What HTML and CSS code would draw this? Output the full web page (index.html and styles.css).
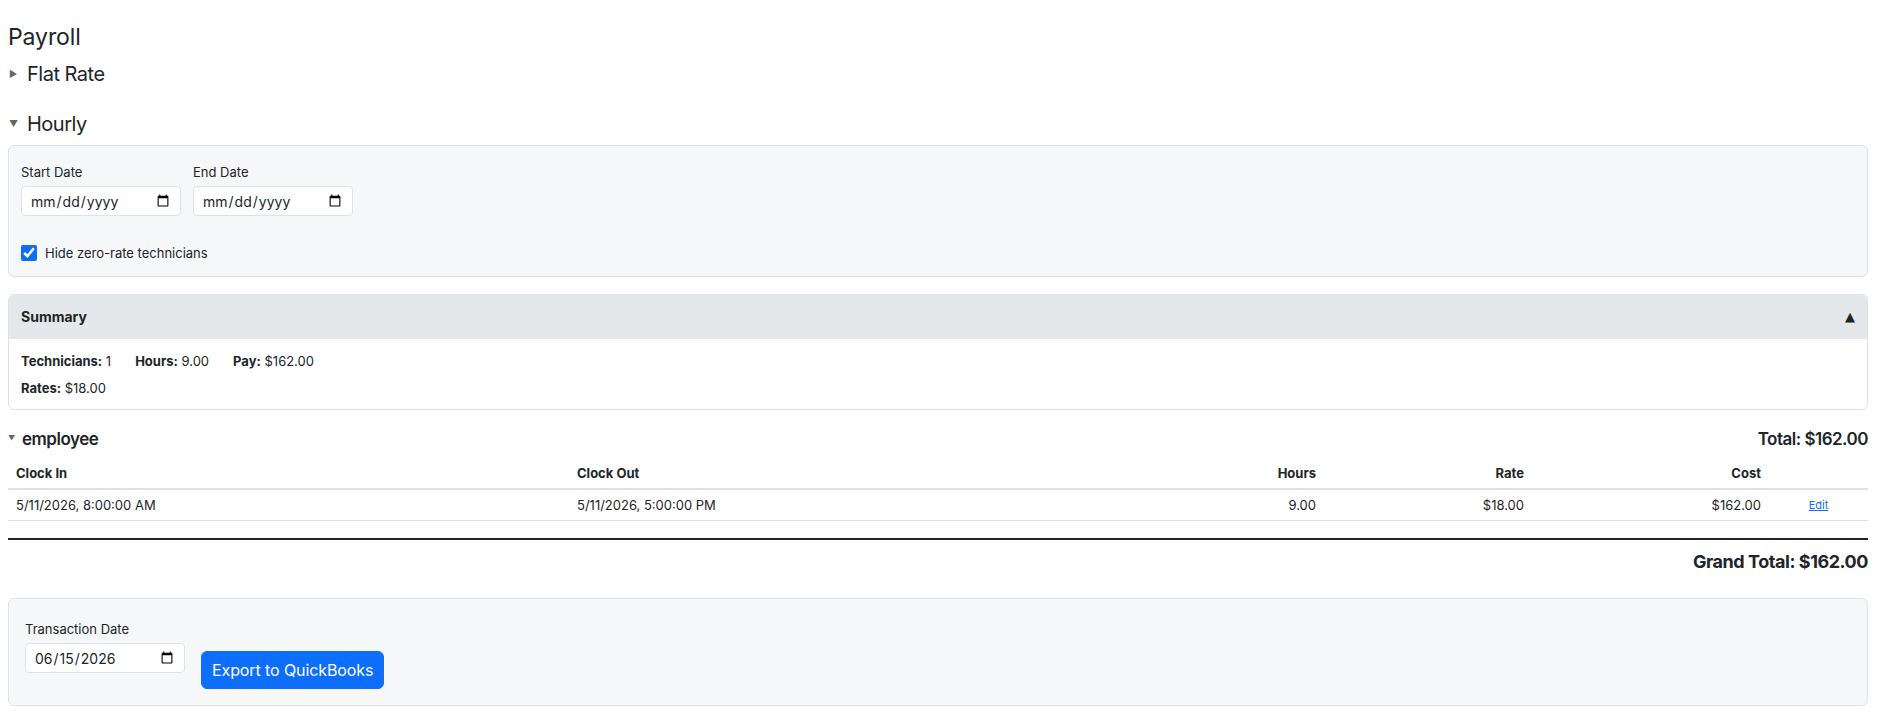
FILE: index.html
```html
<!DOCTYPE html>
<html>
	<head>
		<meta charset="utf-8">
		<title>Payroll</title>
		<link rel="stylesheet" href="styles.css">
	</head>
	<body>
		<div class="page">
			<h2 class="title">Payroll</h2>

			<details class="section">
				<summary><span class="marker">&#9654;</span>Flat Rate</summary>
			</details>

			<details class="section" open>
				<summary><span class="marker">&#9660;</span>Hourly</summary>

				<div class="panel filters">
					<div class="date-row">
						<label class="field">
							<span class="field-label">Start Date</span>
							<input type="date" class="date-input">
						</label>
						<label class="field">
							<span class="field-label">End Date</span>
							<input type="date" class="date-input">
						</label>
					</div>
					<label class="check">
						<input type="checkbox" checked>
						<span>Hide zero-rate technicians</span>
					</label>
				</div>

				<div class="card">
					<div class="card-head">
						<span>Summary</span>
						<span class="caret">&#9650;</span>
					</div>
					<div class="card-body">
						<div class="stats">
							<span><b>Technicians:</b> 1</span>
							<span><b>Hours:</b> 9.00</span>
							<span><b>Pay:</b> $162.00</span>
						</div>
						<div class="stats">
							<span><b>Rates:</b> $18.00</span>
						</div>
					</div>
				</div>

				<div class="tech">
					<div class="tech-head">
						<span class="tech-name"><span class="tech-marker">&#9660;</span>employee</span>
						<span class="tech-total">Total: $162.00</span>
					</div>
					<table class="entries">
						<thead>
							<tr>
								<th class="col-in">Clock In</th>
								<th class="col-out">Clock Out</th>
								<th class="num col-hours">Hours</th>
								<th class="num col-rate">Rate</th>
								<th class="num col-cost">Cost</th>
								<th class="col-edit"></th>
							</tr>
						</thead>
						<tbody>
							<tr>
								<td>5/11/2026, 8:00:00 AM</td>
								<td>5/11/2026, 5:00:00 PM</td>
								<td class="num">9.00</td>
								<td class="num">$18.00</td>
								<td class="num">$162.00</td>
								<td class="edit"><a href="#">Edit</a></td>
							</tr>
						</tbody>
					</table>
				</div>

				<div class="grand">Grand Total: $162.00</div>

				<div class="panel export">
					<label class="field">
						<span class="field-label">Transaction Date</span>
						<input type="date" class="date-input" value="2026-06-15">
					</label>
					<button class="btn-primary">Export to QuickBooks</button>
				</div>
			</details>
		</div>
	</body>
</html>
```

FILE: styles.css
```css
body {
    margin: 0;
    font-family: Inter, "Noto Sans", sans-serif;
    color: #212529;
    background: #fff;
}
.page {
    padding: 0 15px 0 8px;
}
.title {
    margin: 23px 0 10px;
    font-size: 23px;
    font-weight: 400;
    line-height: 29px;
    letter-spacing: -0.1px;
}
.section {
    margin-bottom: 17px;
}
.section > summary {
    list-style: none;
    display: flex;
    align-items: center;
    font-size: 20px;
    line-height: 24px;
    letter-spacing: -0.5px;
    margin-bottom: 9px;
    cursor: pointer;
}
.section > summary::-webkit-details-marker {
    display: none;
}
.marker {
    width: 18px;
    font-size: 9px;
    color: #666;
    padding-left: 1px;
}

.panel {
    background: #f6f7f9;
    border: 1px solid #dee2e6;
    border-radius: 6px;
}
.filters {
    padding: 16px 12px 13px;
}
.date-row {
    display: flex;
    gap: 12px;
}
.field {
    display: flex;
    flex-direction: column;
}
.field-label {
    font-size: 13px;
    line-height: 20px;
    margin-bottom: 4px;
}
.date-input {
    box-sizing: border-box;
    width: 160px;
    height: 30px;
    padding: 0 8px;
    border: 1px solid #dee2e6;
    border-radius: 4px;
    background: #fff;
    font-family: Inter, sans-serif;
    font-size: 14px;
    color: #212529;
}
.check {
    display: flex;
    align-items: center;
    gap: 8px;
    margin-top: 27px;
    font-size: 13px;
    line-height: 20px;
}
.check input {
    width: 16px;
    height: 16px;
    margin: 0;
    accent-color: #0d6efd;
}

.card {
    margin-top: 17px;
    border: 1px solid #dee2e6;
    border-radius: 6px;
    overflow: hidden;
}
.card-head {
    display: flex;
    justify-content: space-between;
    align-items: center;
    background: #e5e8eb;
    padding: 12px;
    font-size: 14px;
    font-weight: 700;
    line-height: 20px;
}
.caret {
    font-family: "DejaVu Sans", sans-serif;
    font-size: 13px;
}
.card-body {
    padding: 12px 12px 11px;
    font-size: 13px;
    line-height: 20px;
    display: flex;
    flex-direction: column;
    gap: 7px;
}
.stats {
    display: flex;
    gap: 24px;
}

.tech {
    margin-top: 17px;
}
.tech-head {
    display: flex;
    justify-content: space-between;
    align-items: center;
    font-size: 17px;
    font-weight: 600;
    line-height: 24px;
    letter-spacing: -0.5px;
}
.tech-name {
    display: flex;
    align-items: center;
}
.tech-marker {
    width: 14px;
    font-size: 7px;
    color: #666;
}
.entries {
    width: 100%;
    margin-top: 7px;
    border-collapse: collapse;
    table-layout: fixed;
    font-size: 13px;
}
.entries th,
.entries td {
    box-sizing: border-box;
    padding: 6px 8px;
    line-height: 18px;
    text-align: left;
    border-bottom: 1px solid #dee2e6;
}
.entries th {
    font-weight: 700;
    border-bottom-width: 2px;
}
.entries .num {
    text-align: right;
}
.col-in { width: 561px; }
.col-out { width: 555px; }
.col-hours { width: 200px; }
.col-rate { width: 208px; }
.col-cost { width: 237px; }
.col-edit { width: 99px; }
.entries td.edit {
    text-align: center;
    font-size: 11px;
}
.edit a {
    color: #0d6efd;
}

.grand {
    margin-top: 17px;
    border-top: 2px solid #212529;
    padding-top: 10px;
    text-align: right;
    font-size: 18px;
    font-weight: 700;
    line-height: 24px;
    letter-spacing: -0.45px;
}

.export {
    margin-top: 24px;
    padding: 20px 16px 16px;
    display: flex;
    align-items: flex-end;
    gap: 16px;
}
.export .field {
    margin-bottom: 16px;
}
.btn-primary {
    background: #0d6efd;
    color: #fff;
    border: 1px solid #0d6efd;
    border-radius: 6px;
    padding: 6px 10px;
    font-family: Inter, sans-serif;
    font-size: 16px;
    line-height: 24px;
    letter-spacing: -0.1px;
}
```
